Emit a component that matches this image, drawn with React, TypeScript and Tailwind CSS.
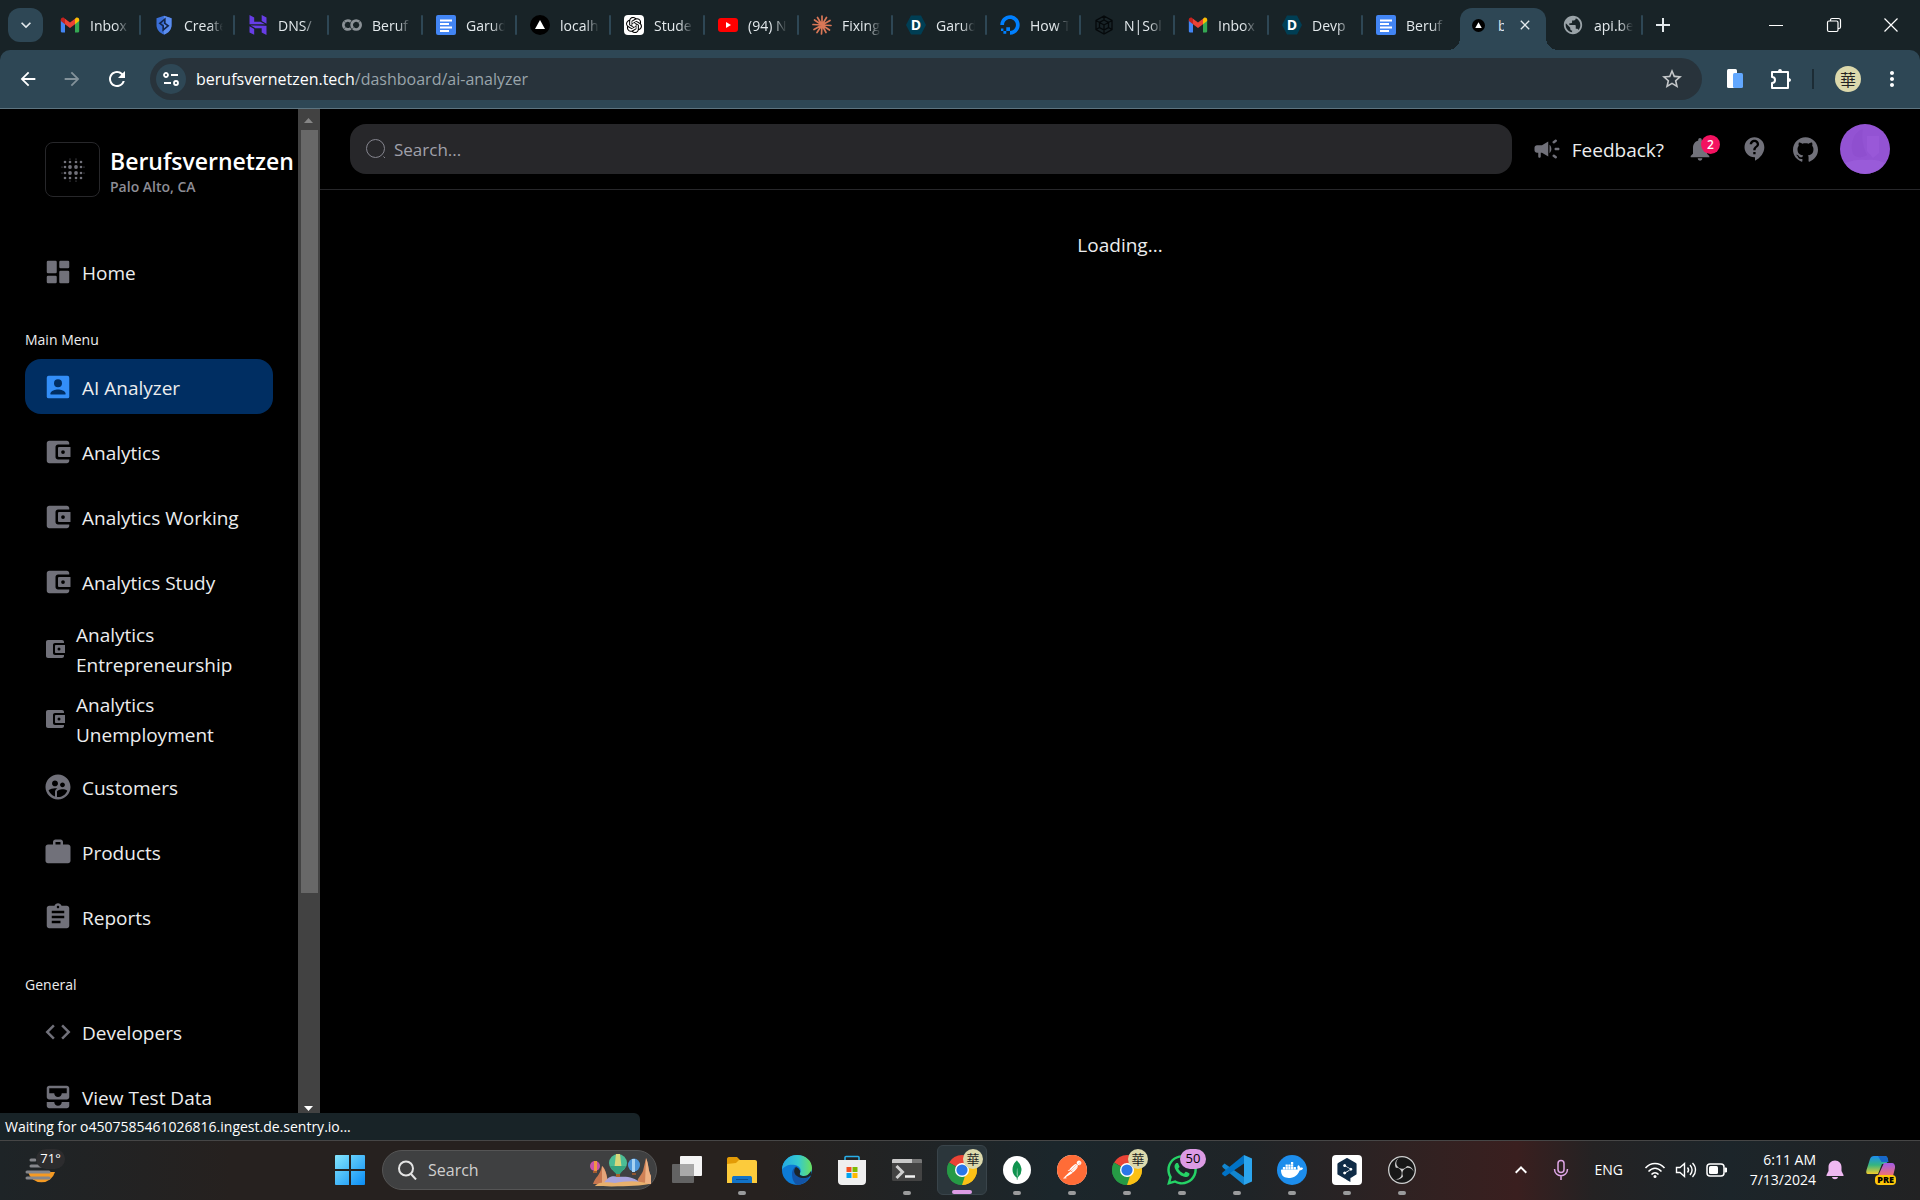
import type { ReactNode } from "react";
import {
  MdAdd, MdArrowBack, MdArrowForward, MdAssignment, MdClose, MdCode, MdContactSupport,
  MdKeyboardArrowDown, MdKeyboardArrowUp, MdMoreVert, MdNotifications,
  MdPublic, MdRefresh, MdStarOutline, MdSupervisedUserCircle, MdAllInbox, MdWork,
} from "react-icons/md";
import {
  SiDeepl, SiDocker, SiGithub, SiGooglecolab, SiHostinger, SiMongodb, SiObsstudio, SiOpenai, SiPostman,
} from "react-icons/si";
import { FaDigitalOcean, FaWhatsapp } from "react-icons/fa";

/* ---------- favicons ---------- */

function Gmail() {
  return (
    <svg viewBox="0 0 24 24" className="size-5">
      <path d="M1 6v13.5c0 .8.7 1.5 1.500 1.500H6V10z" fill="#4285f4" />
      <path d="M23 6v13.500c0 .8-.7 1.500-1.500 1.500H18V10z" fill="#34a853" />
      <path d="M18 4.500V11l5-3.800V5.500c0-2-2.300-3.200-4-2z" fill="#fbbc04" />
      <path d="M6 11V4.500l6 4.500 6-4.500V11l-6 4.600z" fill="#ea4335" />
      <path d="M1 5.500v1.700L6 11V4.500L5 3.500c-1.700-1.200-4 0-4 2z" fill="#c5221f" />
    </svg>
  );
}

function Shield() {
  return (
    <svg viewBox="0 0 24 24" className="size-5">
      <path d="M12 1l9 3v8c0 6-4 9.500-9 11.500C7 21.500 3 18 3 12V4z" fill="#3b6fd8" />
      <path d="M12 1l9 3v8c0 6-4 9.500-9 11.500z" fill="#5b8def" />
      <path d="M7 10l6-5v5l4 3-6 5v-5z" fill="none" stroke="#14264a" strokeWidth="2" />
    </svg>
  );
}

function Docs() {
  return (
    <svg viewBox="0 0 20 20" className="size-5">
      <rect width="20" height="20" rx="2" fill="#4285f4" />
      <path d="M4 5.500h12M4 9h9M4 12.500h12M4 16h9" stroke="#fff" strokeWidth="1.800" />
    </svg>
  );
}

function Triangle({ small }: { small?: boolean }) {
  return (
    <svg viewBox="0 0 20 20" className={small ? "size-[13px]" : "size-5"}>
      <circle cx="10" cy="10" r="10" fill="#000" />
      <path d="M10 5l5 9H5z" fill="#fff" />
    </svg>
  );
}

function Youtube() {
  return (
    <svg viewBox="0 0 20 20" className="size-5">
      <rect y="3" width="20" height="14" rx="3" fill="#f00" />
      <path d="M8 7l5 3-5 3z" fill="#fff" />
    </svg>
  );
}

function Burst() {
  return (
    <svg viewBox="0 0 20 20" className="size-5" stroke="#d97757" strokeWidth="1.700" strokeLinecap="round">
      <path d="M10 10V1M10 10l4.500-7.500M10 10l8-4.500M10 10l9 .5M10 10l7.500 5M10 10l4 7.500M10 10l-.5 9M10 10l-5 7.500M10 10l-8 4.500M10 10l-9-.5M10 10L2.500 5M10 10L5.500 2.500" />
    </svg>
  );
}

function Devpost() {
  return (
    <span className="flex size-5 items-center justify-center bg-[#003e54] text-[14px] leading-5 font-bold text-white [clip-path:polygon(25%_3%,75%_3%,100%_50%,75%_97%,25%_97%,0_50%)]">
      D
    </span>
  );
}

function NodeCube() {
  return (
    <svg viewBox="0 0 20 20" className="size-5" fill="none" stroke="#05090b" strokeWidth="1.300">
      <path d="M10 1l8 4.500v9L10 19l-8-4.500v-9zM10 5l4.500 2.500v5L10 15l-4.500-2.500v-5zM10 10v9M10 10l8-4.500M10 10L2 5.500M5.500 12.500L2 14.500M14.500 12.500l3.500 2M10 1v4" />
    </svg>
  );
}

const tabs: { title: string; icon: ReactNode }[] = [
  { title: "Inbox", icon: <Gmail /> },
  { title: "Create", icon: <Shield /> },
  { title: "DNS/", icon: <SiHostinger className="size-5 text-[#673de6]" /> },
  { title: "Beruf", icon: <SiGooglecolab className="size-5 text-[#8b9297]" /> },
  { title: "Garud", icon: <Docs /> },
  { title: "localh", icon: <Triangle /> },
  { title: "Stude", icon: <span className="flex size-5 items-center justify-center rounded-sm bg-white"><SiOpenai className="size-4 text-black" /></span> },
  { title: "(94) N", icon: <Youtube /> },
  { title: "Fixing", icon: <Burst /> },
  { title: "Garud", icon: <Devpost /> },
  { title: "How T", icon: <FaDigitalOcean className="size-5 text-[#0080ff]" /> },
  { title: "N|Sol", icon: <NodeCube /> },
  { title: "Inbox", icon: <Gmail /> },
  { title: "Devp", icon: <Devpost /> },
  { title: "Beruf", icon: <Docs /> },
];

function Tab({ title, icon, last }: { title: string; icon: ReactNode; last?: boolean }) {
  return (
    <div className="flex h-full w-[94px] shrink-0 items-center pl-[13px]">
      <span className="shrink-0">{icon}</span>
      <span className="ml-[10px] w-[39px] overflow-hidden text-[14px] whitespace-nowrap [mask-image:linear-gradient(to_right,black_65%,transparent)]">{title}</span>
      {!last && <span className="ml-auto h-5 w-[2px] rounded bg-[#2e4755]" />}
    </div>
  );
}

function Avatar({ className }: { className: string }) {
  return (
    <span className={"flex items-center justify-center rounded-full bg-[#dcd9ac] font-['Noto_Sans_CJK_TC',sans-serif] text-[#222] " + className}>華</span>
  );
}

function TabStrip() {
  return (
    <div className="flex h-[50px] items-center pl-2 text-[#e3e9ec]">
      <button aria-label="Search tabs" className="mr-1 flex h-[34px] w-[35px] shrink-0 items-center justify-center rounded-xl bg-[#2e4755]">
        <MdKeyboardArrowDown className="size-5" />
      </button>
      {tabs.map((t, i) => (
        <Tab key={i} title={t.title} icon={t.icon} last={i === tabs.length - 1} />
      ))}
      <div className="relative mx-[3px] flex h-[42px] w-[86px] shrink-0 items-center self-end rounded-t-xl bg-[#2e4755] pb-2 pl-3">
        <span className="absolute bottom-0 -left-3 size-3 bg-[radial-gradient(circle_at_0_0,transparent_12px,#2e4755_12px)]" />
        <span className="absolute -right-3 bottom-0 size-3 bg-[radial-gradient(circle_at_100%_0,transparent_12px,#2e4755_12px)]" />
        <Triangle small />
        <span className="ml-[13px] w-[6px] overflow-hidden text-[14px]">b</span>
        <button aria-label="Close tab" className="ml-[13px]"><MdClose className="size-4" /></button>
      </div>
      <Tab title="api.be" icon={<MdPublic className="size-[22px] text-[#9aa3a8]" />} />
      <button aria-label="New tab" className="ml-2"><MdAdd className="size-6" /></button>
      <div className="ml-auto flex items-center gap-[41px] pr-[21px]">
        <button aria-label="Minimize" className="flex h-4 w-4 items-center"><span className="h-px w-[14px] bg-white" /></button>
        <button aria-label="Restore">
          <svg viewBox="0 0 16 16" className="size-4" fill="none" stroke="#fff" strokeWidth="1.200">
            <rect x="1.500" y="4" width="10.500" height="10.500" rx="1.500" />
            <path d="M4.500 4V3c0-1 .5-1.500 1.500-1.500h6.500c1.300 0 2 .7 2 2V10c0 1-.5 1.500-1.500 1.500h-1" />
          </svg>
        </button>
        <button aria-label="Close">
          <svg viewBox="0 0 16 16" className="size-4" stroke="#fff" strokeWidth="1.200"><path d="M1.500 1.500l13 13M14.500 1.500l-13 13" /></svg>
        </button>
      </div>
    </div>
  );
}

function Toolbar() {
  return (
    <div className="flex h-[59px] items-center rounded-t-[10px] border-b border-[#5d7480] bg-[#2e4755] pl-[17px] text-white">
      <button aria-label="Back"><MdArrowBack className="size-[22px]" /></button>
      <button aria-label="Forward" className="ml-[22px]"><MdArrowForward className="size-[22px] text-[#83929a]" /></button>
      <button aria-label="Reload" className="ml-[22px]"><MdRefresh className="size-6" /></button>
      <div className="ml-[21px] flex h-[42px] flex-1 items-center rounded-full bg-[#28333b] pr-[18px] pl-[6px]">
        <button aria-label="Site information" className="flex size-[30px] items-center justify-center rounded-full bg-[#2e4755]">
          <svg viewBox="0 0 18 18" className="size-[18px]" fill="none" stroke="#fff" strokeWidth="1.800">
            <circle cx="4" cy="5" r="2" /><path d="M9 5h7M2 13h7" /><circle cx="14" cy="13" r="2" />
          </svg>
        </button>
        <p className="ml-[10px] flex-1 text-[16px] text-[#9aa5ab]"><span className="text-white">berufsvernetzen.tech</span>/dashboard/ai-analyzer</p>
        <button aria-label="Bookmark"><MdStarOutline className="size-6 text-[#c4c7c9]" /></button>
      </div>
      <div className="flex items-center pr-4 pl-6">
        <svg viewBox="0 0 18 20" className="h-6 w-[18px]"><rect x="1" width="10" height="19" rx="1.500" fill="#fff" /><rect x="7" y="4" width="10" height="15" rx="1.500" fill="#62a8ff" /></svg>
        <button aria-label="Extensions" className="ml-[25px]">
          <svg viewBox="0 0 24 24" className="size-6" fill="none" stroke="#fff" strokeWidth="2" strokeLinejoin="round">
            <path d="M3 5h16v16H3v-5c4 0 4-6 0-6z" />
            <path d="M9 4.500c0-3.300 4-3.300 4 0zM19.500 11c3.300 0 3.300 4 0 4z" fill="#fff" stroke="none" />
          </svg>
        </button>
        <span className="ml-[19px] h-5 w-[2px] bg-[#1c2c35]" />
        <Avatar className="ml-[21px] size-[26px] text-[16px] leading-none" />
        <button aria-label="Menu" className="ml-[19px]"><MdMoreVert className="size-6" /></button>
      </div>
    </div>
  );
}

/* ---------- sidebar ---------- */

function DashboardIcon() {
  return (
    <svg viewBox="0 0 24 24" fill="currentColor" className="size-[30px]">
      <rect x="3" y="3" width="8" height="10" rx="1" /><rect x="3" y="15" width="8" height="6" rx="1" />
      <rect x="13" y="11" width="8" height="10" rx="1" /><rect x="13" y="3" width="8" height="6" rx="1" />
    </svg>
  );
}

function AccountIcon() {
  return (
    <svg viewBox="0 0 24 24" className="size-[30px]">
      <rect x="3" y="3" width="18" height="18" rx="1.500" fill="#338ef7" />
      <circle cx="12" cy="9" r="3.200" fill="#002e62" />
      <path d="M6 18v-1c0-2 4-3.100 6-3.100s6 1.100 6 3.100v1z" fill="#002e62" />
    </svg>
  );
}

function WalletIcon({ small }: { small?: boolean }) {
  return (
    <svg viewBox="0 0 24 24" fill="currentColor" className={small ? "size-6" : "size-[30px]"}>
      <path d="M10 16V8c0-1.100.89-2 2-2h9V5c0-1.100-.9-2-2-2H5c-1.110 0-2 .9-2 2v14c0 1.100.89 2 2 2h14c1.100 0 2-.9 2-2v-1h-9c-1.110 0-2-.9-2-2z" />
      <path fillRule="evenodd" d="M13 8c-.55 0-1 .45-1 1v6c0 .55.45 1 1 1h9V8zM16 10.500a1.500 1.500 0 1 0 0 3 1.500 1.500 0 1 0 0-3z" />
    </svg>
  );
}

function NavItem({ icon, active, tall, children }: { icon: ReactNode; active?: boolean; tall?: boolean; children: ReactNode }) {
  return (
    <a
      href="#"
      className={
        "flex shrink-0 items-center gap-[9px] rounded-2xl px-[18px] text-[19px] leading-[30px] text-[#ecedee] " +
        (tall ? "h-[60px] " : "h-[55px] ") +
        (active ? "bg-[#002e62]" : "")
      }
    >
      <span className="shrink-0 text-[#71717a]">{icon}</span>
      <span className="pt-[2px]">{children}</span>
    </a>
  );
}

function Logo() {
  const pos = [-11, -8, -3, 3, 8, 11];
  const size = [0.6, 1.3, 1.9, 1.9, 1.3, 0.6];
  return (
    <div className="flex size-[55px] shrink-0 items-center justify-center rounded-lg border border-[#27272a]">
      <svg viewBox="-14 -14 28 28" className="size-7" fill="#71717a">
        {pos.map((y, i) =>
          pos.map((x, j) => {
            const edge = (i % 5 === 0 ? 1 : 0) + (j % 5 === 0 ? 1 : 0);
            const skip = edge === 2 || (edge === 1 && (i === 1 || i === 4 || j === 1 || j === 4));
            return skip ? null : <circle key={i + "-" + j} cx={x} cy={y} r={Math.min(size[i], size[j])} />;
          })
        )}
      </svg>
    </div>
  );
}

function Sidebar() {
  return (
    <aside className="flex w-[320px] shrink-0 overflow-hidden">
      <div className="w-[298px] shrink-0 px-[25px] pt-8">
        <div className="flex items-center gap-[10px] pl-5">
          <Logo />
          <div className="pt-[5px]">
            <h1 className="text-[23px] leading-[30px] font-semibold text-white">Berufsvernetzen</h1>
            <p className="text-[14px] leading-[22px] font-semibold text-[#8d8d96]">Palo Alto, CA</p>
          </div>
        </div>
        <nav className="mt-[46px] flex flex-col gap-[10px]">
          <NavItem icon={<DashboardIcon />}>Home</NavItem>
          <h2 className="mt-5 pt-px text-[14px] leading-[19px] text-[#ecedee]">Main Menu</h2>
          <NavItem active icon={<AccountIcon />}>AI Analyzer</NavItem>
          <NavItem icon={<WalletIcon />}>Analytics</NavItem>
          <NavItem icon={<WalletIcon />}>Analytics Working</NavItem>
          <NavItem icon={<WalletIcon />}>Analytics Study</NavItem>
          <NavItem tall icon={<WalletIcon small />}>Analytics Entrepreneurship</NavItem>
          <NavItem tall icon={<WalletIcon small />}>Analytics Unemployment</NavItem>
          <NavItem icon={<MdSupervisedUserCircle className="size-[30px]" />}>Customers</NavItem>
          <NavItem icon={<MdWork className="size-[30px]" />}>Products</NavItem>
          <NavItem icon={<MdAssignment className="size-[30px]" />}>Reports</NavItem>
          <h2 className="mt-5 pt-px text-[14px] leading-[19px] text-[#ecedee]">General</h2>
          <NavItem icon={<MdCode className="size-[30px]" />}>Developers</NavItem>
          <NavItem icon={<MdAllInbox className="size-[30px]" />}>View Test Data</NavItem>
        </nav>
      </div>
      <div className="flex w-[22px] flex-col items-center bg-[#424242]">
        <svg viewBox="0 0 22 21" className="h-[21px] w-[22px] shrink-0"><path d="M6 14h9l-4.500-5z" fill="#868686" /></svg>
        <div className="h-[74%] w-[17px] bg-[#686868]" />
        <svg viewBox="0 0 22 10" className="mt-auto mb-[27px] h-[10px] w-[22px] shrink-0"><path d="M6 3h9l-4.500 5z" fill="#fff" /></svg>
      </div>
    </aside>
  );
}

function Header() {
  return (
    <header className="flex h-[81px] shrink-0 items-center border-b border-[#27272a] pr-[30px] pl-[30px] text-[#71717a]">
      <label className="flex h-[50px] flex-1 items-center gap-2 rounded-2xl bg-[#27272a] px-4">
        <svg viewBox="0 0 20 20" className="size-5" fill="none" stroke="#85858e" strokeWidth="1"><circle cx="9.500" cy="9.500" r="9" /><path d="M17.500 17.500l1.500 1.500" /></svg>
        <input type="text" aria-label="Search" placeholder="Search..." className="flex-1 bg-transparent pt-[2px] text-[17px] text-white outline-none placeholder:text-[#a1a1aa]" />
      </label>
      <a href="#" className="ml-5 flex items-center gap-[10px] text-[19px] leading-[30px] text-[#ecedee]">
        <svg viewBox="0 0 24 24" className="size-[30px]" fill="#71717a">
          <path d="M18 12c0 .55.45 1 1 1h2c.55 0 1-.45 1-1s-.45-1-1-1h-2c-.55 0-1 .45-1 1zM16.600 16.800c-.3.450-.24 1.070.2 1.400.55.410 1.100.820 1.600 1.200.440.330 1.060.240 1.400-.2.330-.440.240-1.060-.2-1.400-.5-.380-1.060-.8-1.600-1.200-.440-.330-1.070-.240-1.400.2zM19.800 4.810c-.330-.440-.960-.540-1.400-.2-.5.370-1.050.790-1.600 1.190-.440.330-.530.960-.2 1.400s.950.530 1.390.2c.550-.4 1.110-.8 1.610-1.200.440-.320.530-.950.2-1.390zM8 9H4c-1.100 0-2 .9-2 2v2c0 1.100.9 2 2 2h1v3c0 .550.450 1 1 1s1-.450 1-1v-3h1l5 3V6L8 9zM15.500 12c0-1.330-.580-2.530-1.500-3.350v6.690c.920-.810 1.500-2.010 1.500-3.340z" />
        </svg>
        <span className="pt-[2px]">Feedback?</span>
      </a>
      <button aria-label="Notifications" className="relative ml-[22px]">
        <MdNotifications className="size-7" />
        <span className="absolute top-0 -right-[6px] flex size-[19px] items-center justify-center rounded-full bg-[#f31260] text-[12px] leading-none font-semibold text-white">2</span>
      </button>
      <button aria-label="Help" className="ml-[27px]"><MdContactSupport className="size-7" /></button>
      <a href="#" aria-label="GitHub" className="ml-6"><SiGithub className="size-[25px]" /></a>
      <button aria-label="Profile" className="ml-[22px] size-[50px] overflow-hidden rounded-full bg-[#9353d3]">
        <svg viewBox="0 0 50 50" fill="#8c4ccb"><path d="M13 30c-3-9 0-22 10-25-2 6 0 19 4 26-5 3-11 3-14-1z" opacity=".5" /><path d="M27 12h12v17l-6 5-6-7z" fill="#9c5bdc" opacity=".6" /><path d="M5 39c8-3 15-4 21-3 7-1 13 0 19 3L37 50H12z" fill="#9b5fdb" opacity=".7" /></svg>
      </button>
    </header>
  );
}

/* ---------- taskbar ---------- */

function Chrome() {
  return (
    <span className="relative">
      <svg viewBox="0 0 30 30" className="size-[30px]">
        <path d="M15 15L2.010 7.500A15 15 0 0 1 27.990 7.500z" fill="#ea4335" />
        <path d="M15 15L27.990 7.500A15 15 0 0 1 15 30z" fill="#fbc116" />
        <path d="M15 15v15A15 15 0 0 1 2.010 7.500z" fill="#269a45" />
        <path d="M15 8h13.250A15 15 0 0 1 15 30l6.100-11.500z" fill="#fbc116" />
        <path d="M2.010 7.500L8.900 18.500 15 22l3-1-3 9A15 15 0 0 1 2.010 7.500z" fill="#269a45" />
        <circle cx="15" cy="15" r="7" fill="#fff" /><circle cx="15" cy="15" r="5.600" fill="#2a76e8" />
      </svg>
      <Avatar className="absolute -top-[6px] -right-[6px] size-5 text-[13px] leading-none" />
    </span>
  );
}

function TaskView() {
  return (
    <svg viewBox="0 0 30 30" className="size-[30px]">
      <rect x="8" y="1" width="22" height="20" rx="1" fill="#f4f4f4" />
      <rect x="0" y="9" width="22" height="19" rx="1" fill="#636363" />
      <rect x="8" y="9" width="14" height="12" fill="#a9a9a9" />
    </svg>
  );
}

function Explorer() {
  return (
    <svg viewBox="0 0 30 30" className="size-[30px]">
      <path d="M0 4c0-1 .5-2 2-2h8l3 3v8H0z" fill="#e39b06" />
      <path d="M0 9l9-1 3-3h16c1 0 2 .7 2 2v21H0z" fill="#fccb3c" />
      <path d="M5 28v-5c0-1.500 1-2 2-2h16c1 0 2 .5 2 2v5z" fill="#1273c7" /><path d="M9 24.500h12" stroke="#0b4e90" />
    </svg>
  );
}

function Edge() {
  return (
    <svg viewBox="0 0 30 30" className="size-[30px]">
      <defs>
        <linearGradient id="edgeTop" x1="0" x2="1"><stop offset="0" stopColor="#23a9e5" /><stop offset=".55" stopColor="#35c9cf" /><stop offset="1" stopColor="#6be15c" /></linearGradient>
      </defs>
      <circle cx="15" cy="15" r="15" fill="#0d7bd6" />
      <path d="M0 15C0 6 7 0 15 0c9 0 15 6 15 13 0 5-4 8-8 8-3 0-5-1-4-3 2-3 0-7-5-8C7 9 2 11 0 15z" fill="url(#edgeTop)" />
      <path d="M10 19c0-4 2-7 5-8-3 5-1 10 4 12 3 1 6 0 9-2-3 6-8 9-13 9-3-2-5-6-5-11z" fill="#1354a6" />
      <path d="M14 12c-3 3-2 7 1 9 4 3 9 3 13 0l2-1-1-4c-2 3-4 5-7 5s-5-1-4-3c1-2-1-5-4-6z" fill="#1c252a" />
    </svg>
  );
}

function Store() {
  return (
    <svg viewBox="0 0 30 30" className="size-[30px]">
      <path d="M8 6V2.500C8 2 8.500 1.500 9 1.500h12c.5 0 1 .5 1 1V6" fill="none" stroke="#29aee8" strokeWidth="1.600" />
      <path d="M1 5h28v21c0 2.500-1.500 4-4 4H5c-2.500 0-4-1.500-4-4z" fill="#efefef" />
      <path d="M9.500 12h5v5h-5z" fill="#f25022" /><path d="M15.500 12h5v5h-5z" fill="#7fba00" />
      <path d="M9.500 18h5v5h-5z" fill="#00a4ef" /><path d="M15.500 18h5v5h-5z" fill="#ffb900" />
    </svg>
  );
}

function Terminal() {
  return (
    <svg viewBox="0 0 30 30" className="size-[30px]">
      <rect y="4" width="30" height="22" rx="1.500" fill="#434343" />
      <path d="M0 8V5.500C0 4.500.5 4 1.500 4H20v4z" fill="#c9c9c9" /><path d="M20 4h8.500c1 0 1.500.5 1.500 1.500V8H20z" fill="#777" />
      <path d="M4.500 11l6 6-6 6" fill="none" stroke="#cfcfcf" strokeWidth="3" /><path d="M13 21.500h10" stroke="#f2f2f2" strokeWidth="2.500" />
    </svg>
  );
}

function VsCode() {
  return (
    <svg viewBox="0 0 30 30" className="size-[30px]">
      <path d="M0 11l2.500-2.500L22 22v8L1 12.800z" fill="#1286cf" />
      <path d="M22 0v8.500L3 21.500.500 19.500c-.6-.6-.6-1.300 0-2z" fill="#0072c6" />
      <path d="M22 0l8 3.500v23L22 30z" fill="#2ba5ee" />
    </svg>
  );
}

function Balloons() {
  return (
    <svg viewBox="0 0 64 34" className="h-[34px] w-16">
      <path d="M3 31c2-7 7-8 9-18 3 2 5 8 6 18z" fill="#c7764f" /><path d="M12 13c3 3 5 9 6 18h-6z" fill="#e5a57a" />
      <path d="M47 31c0-6 4-8 6-13l3-13c3 7 2 13 5 18v8z" fill="#cf8156" /><path d="M56 5c3 7 2 13 5 18v8h-6z" fill="#edb183" />
      <path d="M14 30c5-8 10-7 14-6 8-1 17 0 22 6z" fill="#a9a4dc" /><path d="M5 33c4-5 14-4 20-3 10-2 24-3 34 1-8 2-35 3-54 2z" fill="#e8b06c" />
      <circle cx="5" cy="13" r="5" fill="#c951a8" /><path d="M4 8h3v10H4z" fill="#ef9544" /><path d="M3 18h4v2H3z" fill="#a35b30" />
      <ellipse cx="28" cy="10" rx="9" ry="9" fill="#4bbd95" /><path d="M26 1h4l2 17h-8z" fill="#d9d77b" /><path d="M20 13c3 6 5 6 6 8h4c1-2 4-4 6-8z" fill="#36a27f" /><path d="M26 21h4v3h-4z" fill="#a4622f" />
      <ellipse cx="44" cy="12" rx="6" ry="6.500" fill="#4c94d8" /><path d="M42 6h3v13h-3z" fill="#a7d2f2" /><path d="M42 20h4v2h-4z" fill="#91552f" />
    </svg>
  );
}

const white = "flex size-7 items-center justify-center rounded-full bg-white";

const apps: { name: string; icon: ReactNode; running?: boolean; active?: boolean }[] = [
  { name: "Task view", icon: <TaskView /> },
  { name: "File Explorer", icon: <Explorer />, running: true },
  { name: "Edge", icon: <Edge /> },
  { name: "Store", icon: <Store /> },
  { name: "Terminal", icon: <Terminal />, running: true },
  { name: "Chrome", icon: <Chrome />, active: true },
  { name: "MongoDB", icon: <span className={white}><SiMongodb className="size-5 text-[#10934f]" /></span>, running: true },
  { name: "Postman", icon: <span className="rounded-full bg-white"><SiPostman className="size-[30px] text-[#ff6c37]" /></span>, running: true },
  { name: "Chrome profile", icon: <Chrome />, running: true },
  {
    name: "WhatsApp",
    icon: (
      <span className="relative">
        <FaWhatsapp className="size-[34px] text-[#25d366]" />
        <span className="absolute -top-1 -right-[7px] flex h-5 w-[26px] items-center justify-center rounded-full bg-[#dc9be4] text-[13px] leading-none text-black">50</span>
      </span>
    ),
    running: true,
  },
  { name: "VS Code", icon: <VsCode />, running: true },
  { name: "Docker", icon: <span className="flex size-[30px] items-center justify-center rounded-full bg-[#1d8dec]"><SiDocker className="size-[22px] text-white" /></span>, running: true },
  { name: "DeepL", icon: <span className="flex size-[30px] items-center justify-center rounded-sm bg-white"><SiDeepl className="size-6 text-[#0f2b46]" /></span>, running: true },
  { name: "OBS", icon: <span className="flex size-7 items-center justify-center rounded-full bg-[#171717]"><SiObsstudio className="size-7 text-[#cfcfcf]" /></span>, running: true },
];

function Taskbar() {
  return (
    <footer className="flex h-[60px] shrink-0 items-center border-t border-[#464646] bg-[linear-gradient(to_right,#1e2427,#26211f_12%,#26211f_40%,#1b262b_55%,#1f2427_65%,#2f2222_73%,#3a1f1f_79%,#242223_83%,#1c252a_90%,#222223)] pb-[2px] text-white">
      <div className="flex w-[335px] shrink-0 items-center pl-6">
        <div className="relative">
          <svg viewBox="0 0 36 36" className="size-9">
            <path d="M4 20h27a14 14 0 0 1-27 0z" fill="#f59a23" />
            <path d="M7 8h4M7 14h12M3 20h22M3 26h22" stroke="#85868b" strokeWidth="3" strokeLinecap="round" />
          </svg>
          <span className="absolute -top-[3px] left-3 flex h-5 w-[29px] items-center justify-center rounded-full bg-[#2c2c2e] text-[13px]">71°</span>
        </div>
      </div>
      <button aria-label="Start">
        <svg viewBox="0 0 30 30" className="size-[30px]">
          <defs><linearGradient id="win" x1="0" y1="0" x2="1" y2="1"><stop offset="0" stopColor="#85e6fd" /><stop offset="1" stopColor="#0a8df5" /></linearGradient></defs>
          <path d="M0 1C0 .5.5 0 1 0h13v14H0zM16 0h13c.5 0 1 .5 1 1v13H16zM0 16h14v14H1c-.5 0-1-.5-1-1zM16 16h14v13c0 .5-.5 1-1 1H16z" fill="url(#win)" />
        </svg>
      </button>
      <label className="ml-[17px] flex h-10 w-[275px] shrink-0 items-center rounded-full border border-[#555] bg-[#3f4041] pr-[2px] pl-[14px]">
        <svg viewBox="0 0 20 20" className="size-5" fill="none" stroke="#e4e4e4" strokeWidth="2"><circle cx="9" cy="8.500" r="7" /><path d="M14 14l5 5.500" /></svg>
        <input type="text" aria-label="Taskbar search" placeholder="Search" className="ml-[11px] w-0 flex-1 bg-transparent text-[16px] outline-none placeholder:text-[#cfcfcf]" />
        <Balloons />
      </label>
      <div className="ml-[5px] flex gap-[5px]">
        {apps.map((a) => (
          <button key={a.name} aria-label={a.name} className={"relative flex size-[50px] items-center justify-center rounded-md " + (a.active ? "border border-[#39444a] bg-[#2b363b]" : "")}>
            {a.icon}
            {a.running && <span className="absolute bottom-0 h-1 w-2 rounded-full bg-[#9a9b9c]" />}
            {a.active && <span className="absolute bottom-0 h-1 w-5 rounded-full bg-[#dc9be4]" />}
          </button>
        ))}
      </div>
      <div className="ml-auto flex items-center pr-6 text-[14px]">
        <button aria-label="Hidden icons"><MdKeyboardArrowUp className="size-6" /></button>
        <svg viewBox="0 0 16 22" className="ml-5 h-[22px] w-4" fill="none" stroke="#dfa6e6" strokeWidth="1.500"><rect x="5" y="1.500" width="6" height="12" rx="3" /><path d="M1.500 10c0 9 13 9 13 0M8 17v4" /></svg>
        <span className="ml-[26px]">ENG</span>
        <div className="ml-[21px] flex items-center gap-[9px]">
          <svg viewBox="0 0 22 18" className="h-[18px] w-[22px]" fill="none" stroke="#fff" strokeWidth="1.500"><path d="M1.500 7c5-6 14-6 19 0M4.500 10.500c4-4.500 9-4.500 13 0M7.500 13.500c2-2.500 5-2.500 7 0" /><circle cx="11" cy="15.500" r="1.500" fill="#fff" stroke="none" /></svg>
          <svg viewBox="0 0 22 18" className="h-[18px] w-[22px]" fill="none" stroke="#fff" strokeWidth="1.400"><path d="M1.500 6.500h3.500L9.500 2.500v13L5 11.500H1.500zM12.500 6.500c1.300 1.500 1.300 3.500 0 5M15 4c2.500 3 2.500 7 0 10M17.500 2c4 4 4 10 0 14" /></svg>
          <svg viewBox="0 0 22 14" className="h-[14px] w-[22px]"><rect x="1" y="1" width="17" height="12" rx="3" fill="none" stroke="#fff" strokeWidth="1.500" /><rect x="3" y="3" width="9" height="8" rx="1.500" fill="#fff" /><path d="M19 5h1.500v4H19z" fill="#fff" stroke="#fff" /></svg>
        </div>
        <div className="ml-[18px] w-[70px] text-right leading-5">
          <p>6:11 AM</p>
          <p>7/13/2024</p>
        </div>
        <svg viewBox="0 0 18 20" className="ml-[10px] h-5 w-[18px]" fill="#efb8f2"><path d="M9 .5c-4 0-6.500 3-6.500 6.500v4L.5 15v1h17v-1l-2-4V7c0-3.500-2.500-6.500-6.500-6.500zM6 17h6c-.5 3-5.500 3-6 0z" /></svg>
        <div className="relative ml-[22px]">
          <svg viewBox="0 0 30 30" className="size-[30px]">
            <defs>
              <linearGradient id="copA" x1="0" y1="0" x2="0" y2="1"><stop offset="0" stopColor="#1c8df0" /><stop offset=".5" stopColor="#35b57f" /><stop offset="1" stopColor="#f2cb2d" /></linearGradient>
              <linearGradient id="copB" x1="0" y1="0" x2="0" y2="1"><stop offset="0" stopColor="#a25be8" /><stop offset="1" stopColor="#f4726c" /></linearGradient>
            </defs>
            <path d="M8 1h11c2 0 3 2 3 5l-2 3h-4l-4 10H2c-2 0-2-2-1.500-4L4 4c.7-2 2-3 4-3z" fill="url(#copA)" />
            <path d="M12 1h7c2 0 3 2 3.500 6h-7z" fill="#1767c9" />
            <path d="M18 8h8c2 0 3.500 2 3 5l-2 8H12z" fill="url(#copB)" />
          </svg>
          <span className="absolute right-0 bottom-0 rounded-sm bg-[#fdc60b] px-[2px] text-[9px] leading-[10px] font-extrabold text-black">PRE</span>
        </div>
      </div>
    </footer>
  );
}

export default function App() {
  return (
    <div className="flex h-screen flex-col overflow-hidden bg-black font-['Open_Sans',sans-serif]">
      <div className="shrink-0 bg-[#182327]">
        <TabStrip />
        <Toolbar />
      </div>
      <div className="relative flex min-h-0 flex-1">
        <Sidebar />
        <main className="flex min-w-0 flex-1 flex-col">
          <Header />
          <p className="mt-10 text-center text-[19px] leading-[30px] text-[#ecedee]">Loading...</p>
        </main>
        <div className="absolute bottom-0 left-0 h-[27px] w-1/3 rounded-tr-md bg-[#182327] pl-[5px] text-[14px] leading-[27px] text-white">
          Waiting for o4507585461026816.ingest.de.sentry.io...
        </div>
      </div>
      <Taskbar />
    </div>
  );
}
